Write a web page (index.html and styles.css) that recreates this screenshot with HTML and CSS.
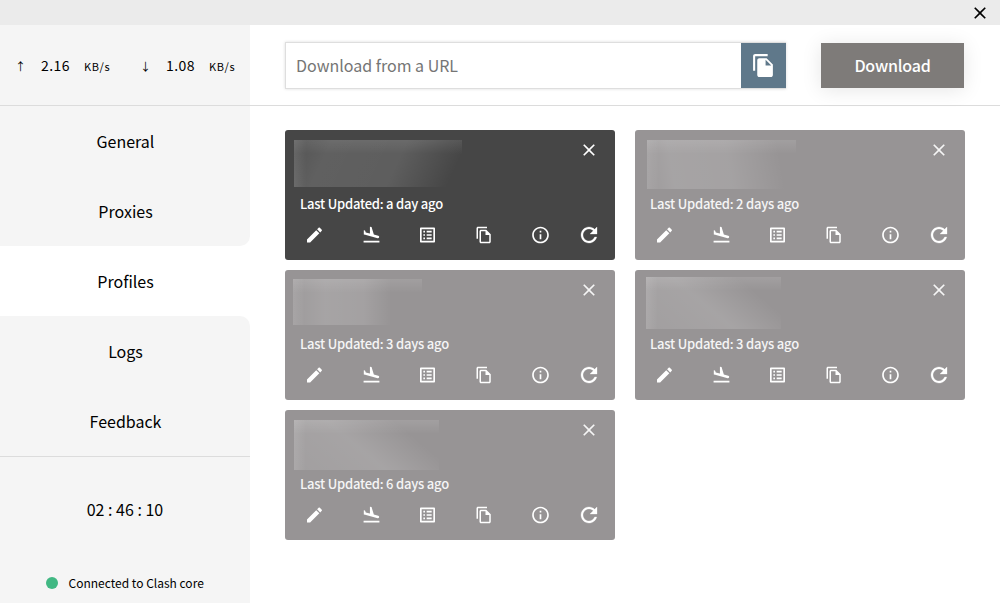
FILE: index.html
```
<!DOCTYPE html>
<html lang="en">
<head>
<meta charset="utf-8">
<title>Clash – Profiles</title>
<link rel="stylesheet" href="styles.css">
</head>
<body>
<svg class="sprite" aria-hidden="true">
  <symbol id="close" viewBox="0 0 24 24"><path d="M19 6.41L17.59 5 12 10.59 6.41 5 5 6.41 10.59 12 5 17.59 6.41 19 12 13.41 17.59 19 19 17.59 13.41 12z"/></symbol>
  <symbol id="edit" viewBox="0 0 24 24"><path d="M3 17.25V21h3.75L17.81 9.94l-3.75-3.75L3 17.25zM20.71 7.04c.39-.39.39-1.02 0-1.41l-2.34-2.34c-.39-.39-1.02-.39-1.41 0l-1.83 1.83 3.75 3.75 1.83-1.83z"/></symbol>
  <symbol id="land" viewBox="0 0 24 24"><path d="M2.5 19h19v2h-19v-2zm7.18-5.73l4.35 1.16 5.31 1.42c.8.21 1.62-.26 1.84-1.06.21-.8-.26-1.62-1.06-1.84l-5.31-1.42-2.76-9.02L10.12 2v8.28L5.15 8.95l-.93-2.32-1.45-.39v5.17l1.6.43 5.31 1.43z"/></symbol>
  <symbol id="list" viewBox="0 0 24 24"><path d="M19 5v14H5V5h14m1.1-2H3.9c-.5 0-.9.4-.9.9v16.2c0 .4.4.9.9.9h16.2c.4 0 .9-.5.9-.9V3.9c0-.5-.5-.9-.9-.9zM11 7h6v2h-6V7zm0 4h6v2h-6v-2zm0 4h6v2h-6v-2zM7 7h2v2H7V7zm0 4h2v2H7v-2zm0 4h2v2H7v-2z"/></symbol>
  <symbol id="copy" viewBox="0 0 24 24"><path d="M16 1H4c-1.1 0-2 .9-2 2v14h2V3h12V1zm-1 4H8c-1.1 0-1.99.9-1.99 2L6 21c0 1.1.89 2 1.99 2H19c1.1 0 2-.9 2-2V11l-6-6zM8 21V7h6v5h5v9H8z"/></symbol>
  <symbol id="paste" viewBox="0 0 24 24"><path d="M16 1H4c-1.1 0-2 .9-2 2v14h2V3h12V1zm-1 4l6 6v10c0 1.1-.9 2-2 2H7.99C6.89 23 6 22.1 6 21l.01-14c0-1.1.89-2 1.99-2h7zm-1 7h5.5L14 6.5V12z"/></symbol>
  <symbol id="info" viewBox="0 0 24 24"><path d="M11 7h2v2h-2V7zm0 4h2v6h-2v-6zm1-9C6.48 2 2 6.48 2 12s4.48 10 10 10 10-4.48 10-10S17.52 2 12 2zm0 18c-4.41 0-8-3.59-8-8s3.59-8 8-8 8 3.59 8 8-3.59 8-8 8z"/></symbol>
  <symbol id="refresh" viewBox="0 0 24 24"><path d="M17.65 6.35C16.2 4.9 14.21 4 12 4c-4.42 0-7.99 3.58-7.99 8s3.57 8 7.99 8c3.73 0 6.84-2.55 7.73-6h-2.08c-.82 2.33-3.04 4-5.65 4-3.31 0-6-2.69-6-6s2.69-6 6-6c1.66 0 3.14.69 4.22 1.78L13 11h7V4l-2.35 2.35z"/></symbol>
</svg>

<header class="titlebar"><svg class="icon icon-close"><use href="#close"/></svg></header>

<div class="app">
  <aside class="sidebar">
    <div class="traffic">
      <span class="arrow">↑</span><span class="rate">2.16</span><span class="unit">KB/s</span>
      <span class="arrow">↓</span><span class="rate">1.08</span><span class="unit">KB/s</span>
    </div>
    <nav class="menu">
      <a class="item">General</a>
      <a class="item before-active">Proxies</a>
      <a class="item active">Profiles</a>
      <a class="item after-active">Logs</a>
      <a class="item">Feedback</a>
    </nav>
    <div class="status">
      <div class="clock">02 : 46 : 10</div>
      <div class="connection"><span class="dot"></span><span>Connected to Clash core</span></div>
    </div>
  </aside>

  <main class="main">
    <div class="toolbar">
      <div class="url-box">
        <span class="url-input">Download from a URL</span>
        <span class="paste"><svg class="icon"><use href="#paste"/></svg></span>
      </div>
      <div class="download">Download</div>
    </div>
    <section class="profiles">
      <article class="card selected">
        <div class="head"><div class="name name-a"></div><svg class="icon icon-close"><use href="#close"/></svg></div>
        <div class="updated">Last Updated: a day ago</div>
        <div class="actions"><svg class="icon"><use href="#edit"/></svg><svg class="icon"><use href="#land"/></svg><svg class="icon"><use href="#list"/></svg><svg class="icon icon-copy"><use href="#copy"/></svg><svg class="icon"><use href="#info"/></svg><svg class="icon icon-refresh"><use href="#refresh"/></svg></div>
      </article>
      <article class="card">
        <div class="head"><div class="name name-b"></div><svg class="icon icon-close"><use href="#close"/></svg></div>
        <div class="updated">Last Updated: 2 days ago</div>
        <div class="actions"><svg class="icon"><use href="#edit"/></svg><svg class="icon"><use href="#land"/></svg><svg class="icon"><use href="#list"/></svg><svg class="icon icon-copy"><use href="#copy"/></svg><svg class="icon"><use href="#info"/></svg><svg class="icon icon-refresh"><use href="#refresh"/></svg></div>
      </article>
      <article class="card">
        <div class="head"><div class="name name-c"></div><svg class="icon icon-close"><use href="#close"/></svg></div>
        <div class="updated">Last Updated: 3 days ago</div>
        <div class="actions"><svg class="icon"><use href="#edit"/></svg><svg class="icon"><use href="#land"/></svg><svg class="icon"><use href="#list"/></svg><svg class="icon icon-copy"><use href="#copy"/></svg><svg class="icon"><use href="#info"/></svg><svg class="icon icon-refresh"><use href="#refresh"/></svg></div>
      </article>
      <article class="card">
        <div class="head"><div class="name name-d"></div><svg class="icon icon-close"><use href="#close"/></svg></div>
        <div class="updated">Last Updated: 3 days ago</div>
        <div class="actions"><svg class="icon"><use href="#edit"/></svg><svg class="icon"><use href="#land"/></svg><svg class="icon"><use href="#list"/></svg><svg class="icon icon-copy"><use href="#copy"/></svg><svg class="icon"><use href="#info"/></svg><svg class="icon icon-refresh"><use href="#refresh"/></svg></div>
      </article>
      <article class="card">
        <div class="head"><div class="name name-e"></div><svg class="icon icon-close"><use href="#close"/></svg></div>
        <div class="updated">Last Updated: 6 days ago</div>
        <div class="actions"><svg class="icon"><use href="#edit"/></svg><svg class="icon"><use href="#land"/></svg><svg class="icon"><use href="#list"/></svg><svg class="icon icon-copy"><use href="#copy"/></svg><svg class="icon"><use href="#info"/></svg><svg class="icon icon-refresh"><use href="#refresh"/></svg></div>
      </article>
    </section>
  </main>
</div>
</body>
</html>
```
FILE: styles.css
```
* { box-sizing: border-box; }
body {
  margin: 0;
  height: 603px;
  display: flex;
  flex-direction: column;
  overflow: hidden;
  background: #fff;
  color: #000;
  font-family: "Noto Sans CJK SC", "Noto Sans", sans-serif;
  font-size: 16px;
}
.sprite { display: none; }
.icon { display: block; flex: none; width: 21px; height: 21px; fill: currentColor; }
.icon-close { width: 20px; height: 20px; }

.titlebar {
  height: 25px;
  flex: none;
  display: flex;
  justify-content: flex-end;
  align-items: center;
  padding: 1px 10px 0 0;
  background: #ebebeb;
}

.app { flex: 1; display: flex; }
.sidebar { width: 250px; display: flex; flex-direction: column; }

.traffic {
  height: 81px;
  flex: none;
  display: grid;
  grid-template-columns: 24px 43px 58px 24px 43px 1fr;
  align-items: baseline;
  padding: 28px 0 0 17px;
  background: #f5f5f5;
  border-bottom: 1px solid #dcdcdc;
  line-height: 25px;
  white-space: nowrap;
}
.arrow { font: 11px "Noto Sans CJK SC", sans-serif; width: 7px; display: flex; justify-content: center; }
.rate { font-size: 14px; letter-spacing: .4px; }
.unit { font-size: 11px; letter-spacing: .6px; }

.menu { flex: none; display: flex; flex-direction: column; }
.item {
  height: 70px;
  display: flex;
  align-items: center;
  justify-content: center;
  padding-left: 1px;
  background: #f5f5f5;
}
.item.active { background: #fff; }
.before-active { border-bottom-right-radius: 10px; }
.after-active { border-top-right-radius: 10px; }

.status {
  flex: 1;
  display: flex;
  flex-direction: column;
  background: #f5f5f5;
  border-top: 1px solid #dcdcdc;
}
.clock { padding-top: 40px; line-height: 24px; text-align: center; }
.connection {
  display: flex;
  align-items: center;
  gap: 10.5px;
  margin-top: 52px;
  padding-left: 46px;
  font-size: 12px;
  line-height: 20px;
}
.dot { width: 12px; height: 12px; border-radius: 50%; background: #41b883; }

.main { flex: 1; }
.toolbar {
  height: 81px;
  display: flex;
  align-items: flex-start;
  padding: 17px 36px 0 35px;
  justify-content: space-between;
  border-bottom: 1px solid #dcdcdc;
}
.url-box {
  width: 501px;
  height: 47px;
  display: flex;
  border: 1px solid #dedede;
  box-shadow: 0 0 3px rgba(0, 0, 0, .14);
}
.url-input { flex: 1; padding-left: 10px; line-height: 45px; color: #757575; }
.paste {
  width: 45px;
  display: flex;
  align-items: center;
  justify-content: center;
  margin-right: -1px;
  background: #5f788a;
  color: #fff;
}
.paste .icon { width: 25px; height: 25px; }
.download {
  width: 143px;
  height: 45px;
  margin-top: 1px;
  background: #7e7b79;
  color: #fff;
  font-weight: 500;
  letter-spacing: -.2px;
  line-height: 45px;
  text-align: center;
  box-shadow: 0 2px 20px rgba(0, 0, 0, .1);
}

.profiles {
  display: grid;
  grid-template-columns: 330px 330px;
  grid-auto-rows: 130px;
  gap: 10px 20px;
  padding: 24px 35px;
}
.card { border-radius: 3px; background: #979495; color: #f5f5f5; }
.card.selected { background: #464646; color: #fff; }
.head {
  height: 63px;
  display: flex;
  align-items: flex-start;
  justify-content: space-between;
  padding-right: 16px;
}
.head .icon-close { margin-top: 10px; }
.updated {
  height: 22px;
  padding-left: 15px;
  font-size: 13px;
  font-weight: 500;
  letter-spacing: -.22px;
  line-height: 22px;
}
.actions {
  display: flex;
  align-items: center;
  gap: 35.5px;
  height: 40px;
  padding-left: 19px;
  color: #fff;
}
.actions .icon { width: 21px; height: 20px; }
.actions .icon-copy { width: 18px; height: 18px; margin: 0 1.5px; }
.actions .icon-refresh { width: 24px; height: 24px; margin-left: -10px; stroke: currentColor; stroke-width: .3px; }

/* Obscured profile names: soft light patches fading to the card colour */
.name {
  background:
    linear-gradient(90deg, rgba(255, 255, 255, .1), transparent 12px),
    linear-gradient(180deg, rgba(255, 255, 255, .1), transparent 14px),
    linear-gradient(80deg, rgba(255, 255, 255, .06), rgba(255, 255, 255, .15) 18%, rgba(255, 255, 255, .13) 55%, transparent 88%);
}
.name-a {
  width: 168px; height: 47px; margin: 10px 0 0 9px;
  background:
    linear-gradient(90deg, rgba(255, 255, 255, .1), transparent 12px),
    linear-gradient(180deg, rgba(255, 255, 255, .08), transparent 14px),
    linear-gradient(115deg, rgba(255, 255, 255, .07), rgba(255, 255, 255, .14) 20%, rgba(255, 255, 255, .13) 60%, transparent 92%);
}
.name-b { width: 149px; height: 49px; margin: 10px 0 0 12px; }
.name-c {
  width: 129px; height: 46px; margin: 9px 0 0 8px;
  background:
    linear-gradient(90deg, rgba(255, 255, 255, .1), transparent 12px),
    linear-gradient(180deg, rgba(255, 255, 255, .1), transparent 14px),
    linear-gradient(90deg, rgba(255, 255, 255, .06), rgba(255, 255, 255, .15) 25%, rgba(255, 255, 255, .12) 55%, transparent 76%);
}
.name-d { width: 135px; height: 52px; margin: 7px 0 0 11px; }
.name-e { width: 145px; height: 50px; margin: 10px 0 0 9px; }
.name-d, .name-e {
  background:
    linear-gradient(90deg, rgba(255, 255, 255, .1), transparent 12px),
    linear-gradient(180deg, rgba(255, 255, 255, .11), transparent 14px),
    linear-gradient(40deg, rgba(255, 255, 255, .1), rgba(255, 255, 255, .15) 45%, rgba(255, 255, 255, .12) 52%, transparent 78%);
}
```
